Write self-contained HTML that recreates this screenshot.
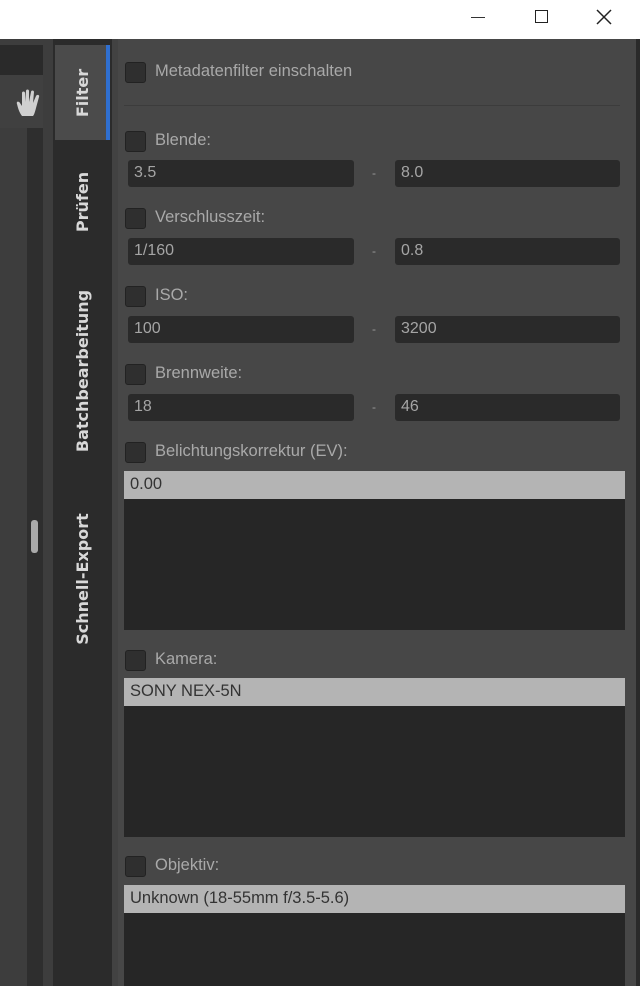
<!DOCTYPE html>
<html><head><style>
*{margin:0;padding:0;box-sizing:border-box}
body{width:640px;height:986px;overflow:hidden;background:#474747;font-family:"Liberation Sans",sans-serif;position:relative}
.a{position:absolute}
.cb{position:absolute;left:125px;width:21px;height:21px;background:#2f2f2f;border:1px solid #222;border-radius:3px}
.lbl{position:absolute;left:155px;color:#a9a9a9;font-size:16.5px}
.in{position:absolute;height:27px;background:#2a2a2a;border-radius:3px;color:#a5a5a5;font-size:16px;padding:4px 0 0 6px}
.dash{position:absolute;left:372px;color:#999;font-size:12px}
.lh{position:absolute;left:124px;width:501px;height:28px;background:#b4b4b4;color:#333;font-size:16.5px;padding:4px 0 0 6px}
.lb{position:absolute;left:124px;width:501px;background:#262626}
.vt{position:absolute;color:#d8d8d8;font-weight:bold;font-family:"DejaVu Sans",sans-serif;font-size:16px;transform:rotate(-90deg);transform-origin:center;white-space:nowrap;text-align:center;width:200px;left:-17px;line-height:20px}
</style></head><body>
<div class="a" style="left:0;top:0;width:640px;height:39px;background:#fff"></div>
<div class="a" style="left:471px;top:17px;width:14px;height:1px;background:#333"></div>
<div class="a" style="left:535px;top:10px;width:13px;height:13px;border:1.5px solid #222"></div>
<svg class="a" style="left:596px;top:9px" width="16" height="16"><path d="M1 1L15 15M15 1L1 15" stroke="#222" stroke-width="1.5"/></svg>
<div class="a" style="left:0;top:39px;width:53px;height:947px;background:#3d3d3d"></div>
<div class="a" style="left:0;top:45px;width:43px;height:30px;background:#2a2a2a"></div>
<div class="a" style="left:0;top:75px;width:43px;height:53px;background:#404040"></div>
<div class="a" style="left:27px;top:128px;width:16px;height:858px;background:#2e2e2e"></div>
<div class="a" style="left:31px;top:520px;width:7px;height:33px;background:#aaa;border-radius:3px"></div>
<svg class="a" style="left:16px;top:88px" width="26" height="30" viewBox="0 0 26 30"><path d="M6 28 C3 24 2 20 1 16 C0 13 3 13 4 15 L6 18 L6 5 C6 3 9 3 9 5 L9 14 L10 3 C10 1 13 1 13 3 L13 14 L15 4 C15 2 18 2 18 4 L17 15 L20 8 C21 6 24 7 23 9 L20 20 C19 24 18 27 17 28 Z" fill="#d0d0d0"/></svg>
<div class="a" style="left:53px;top:39px;width:59px;height:947px;background:#2b2b2b"></div>
<div class="a" style="left:55px;top:45px;width:55px;height:95px;background:#4b4b4b;border-right:4px solid #2f6fd0"></div>
<div class="vt" style="top:83px">Filter</div>
<div class="vt" style="top:192px">Prüfen</div>
<div class="vt" style="top:361px">Batchbearbeitung</div>
<div class="vt" style="top:569px">Schnell-Export</div>
<div class="a" style="left:636px;top:39px;width:4px;height:947px;background:#2a2a2a"></div>
<div class="a" style="left:112px;top:39px;width:6px;height:947px;background:#424242"></div>

<div class="cb" style="top:62px"></div><div class="lbl" style="top:62px">Metadatenfilter einschalten</div>
<div class="a" style="left:124px;top:105px;width:496px;height:1px;background:#3c3c3c"></div>

<div class="cb" style="top:131px"></div><div class="lbl" style="top:131px">Blende:</div>
<div class="in" style="left:128px;top:160px;width:226px">3.5</div><div class="dash" style="top:166px">-</div><div class="in" style="left:395px;top:160px;width:225px">8.0</div>

<div class="cb" style="top:208px"></div><div class="lbl" style="top:208px">Verschlusszeit:</div>
<div class="in" style="left:128px;top:238px;width:226px">1/160</div><div class="dash" style="top:244px">-</div><div class="in" style="left:395px;top:238px;width:225px">0.8</div>

<div class="cb" style="top:286px"></div><div class="lbl" style="top:286px">ISO:</div>
<div class="in" style="left:128px;top:316px;width:226px">100</div><div class="dash" style="top:322px">-</div><div class="in" style="left:395px;top:316px;width:225px">3200</div>

<div class="cb" style="top:364px"></div><div class="lbl" style="top:364px">Brennweite:</div>
<div class="in" style="left:128px;top:394px;width:226px">18</div><div class="dash" style="top:400px">-</div><div class="in" style="left:395px;top:394px;width:225px">46</div>

<div class="cb" style="top:442px"></div><div class="lbl" style="top:442px">Belichtungskorrektur (EV):</div>
<div class="lh" style="top:471px">0.00</div><div class="lb" style="top:499px;height:131px"></div>

<div class="cb" style="top:650px"></div><div class="lbl" style="top:650px">Kamera:</div>
<div class="lh" style="top:678px">SONY NEX-5N</div><div class="lb" style="top:706px;height:131px"></div>

<div class="cb" style="top:856px"></div><div class="lbl" style="top:856px">Objektiv:</div>
<div class="lh" style="top:885px">Unknown (18-55mm f/3.5-5.6)</div><div class="lb" style="top:913px;height:73px"></div>
</body></html>
